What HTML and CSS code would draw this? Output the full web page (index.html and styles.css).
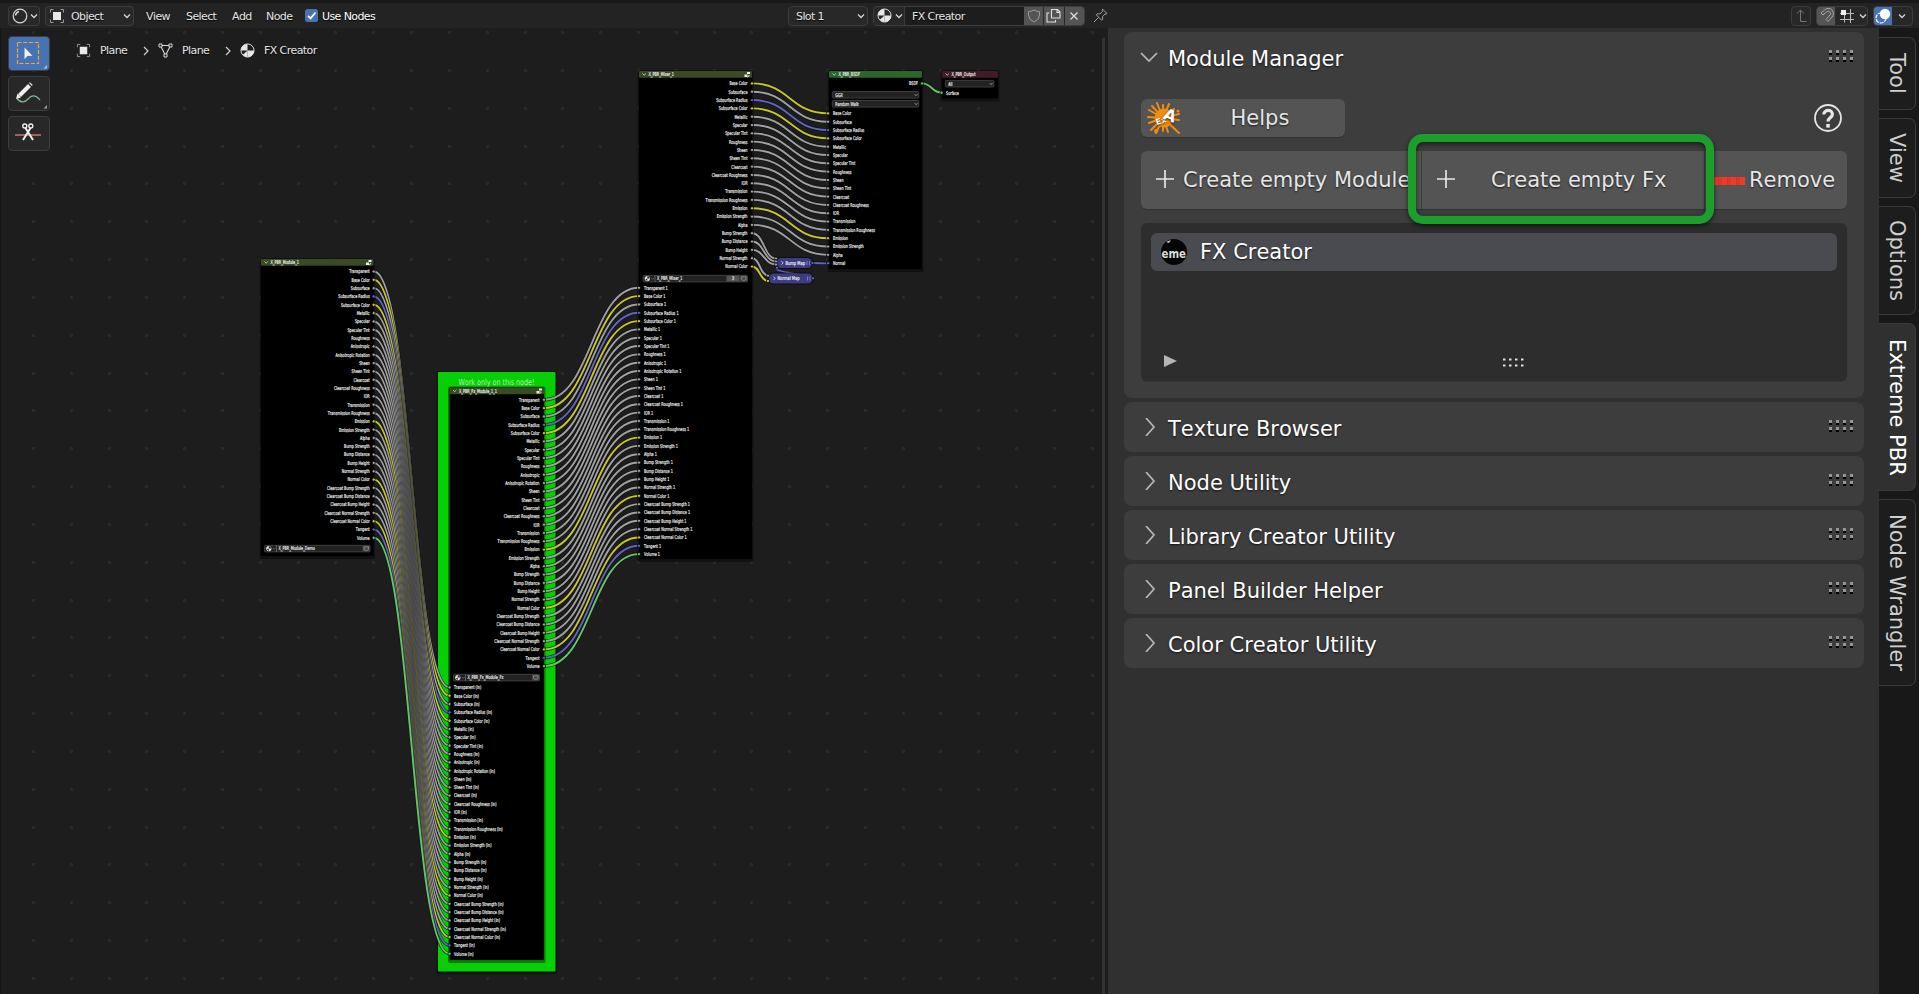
FILE: index.html
```html
<!DOCTYPE html>
<html lang="en">
<head>
<meta charset="utf-8">
<title>Shader Editor</title>
<link rel="stylesheet" href="styles.css">
</head>
<body>
<svg width="0" height="0" class="defs">
  <defs>
    <symbol id="ball" viewBox="0 0 16 16"><circle cx="8" cy="8" r="7" fill="none" stroke="#e0e0e0" stroke-width="1"/><path d="M1 8a7 7 0 0 1 7-7v7zM8 8h7a7 7 0 0 1-7 7z" fill="#e6e6e6"/><path d="M3 12.500L8 8v7a7 7 0 0 1-5-2.500z" fill="#e6e6e6"/></symbol>
    <symbol id="obj" viewBox="0 0 16 16"><rect x="4" y="4" width="8" height="8" fill="#e8e8e8"/><path d="M1.500 4.500v-3h3M11.500 1.500h3v3M14.500 11.500v3h-3M4.500 14.500h-3v-3" fill="none" stroke="#9a9a9a"/></symbol>
    <symbol id="chev" viewBox="0 0 8 8"><path d="M1 2.500l3 3 3-3" fill="none" stroke="#d6d6d6" stroke-width="1.300"/></symbol>
    <symbol id="sep" viewBox="0 0 8 10"><path d="M2 1l4 4-4 4" fill="none" stroke="#cfcfcf" stroke-width="1.200"/></symbol>
    <symbol id="plus" viewBox="0 0 18 18"><path d="M9 0v18M0 9h18" stroke="#e6e6e6" stroke-width="1.700"/></symbol>
    <symbol id="open" viewBox="0 0 18 18"><path d="M1 5l8 8 8-8" fill="none" stroke="#b8b8b8" stroke-width="1.700"/></symbol>
    <symbol id="shut" viewBox="0 0 18 18"><path d="M6 0l8 9-8 9" fill="none" stroke="#b8b8b8" stroke-width="1.700"/></symbol>
    <symbol id="grip" viewBox="0 0 25 13">
      <path d="M0 1.500h3M7 1.500h3M14 1.500h3M21 1.500h3M0 8.500h3M7 8.500h3M14 8.500h3M21 8.500h3" stroke="#979797" stroke-width="3"/>
      <path d="M0 4h3M7 4h3M14 4h3M21 4h3M0 11h3M7 11h3M14 11h3M21 11h3" stroke="#000" stroke-width="2"/></symbol>
  </defs>
</svg>

<header class="topbar">
  <div class="box editor"><svg width="16" height="16" viewBox="0 0 16 16"><circle cx="8" cy="8" r="6.800" fill="none" stroke="#d8d8d8" stroke-width="1.200"/><path d="M3.500 7.500q.4-3 3.500-4" fill="none" stroke="#d8d8d8" stroke-width="1.500"/></svg><svg width="8" height="8"><use href="#chev"/></svg></div>
  <div class="box mode"><svg width="16" height="16"><use href="#obj"/></svg><span>Object</span><svg class="end" width="8" height="8"><use href="#chev"/></svg></div>
  <nav class="menu"><span>View</span><span>Select</span><span>Add</span><span>Node</span></nav>
  <label class="usenodes"><svg width="13" height="13"><rect width="13" height="13" rx="2.500" fill="#4772b3"/><path d="M3 6.800l2.600 2.600L10.500 3.500" fill="none" stroke="#fff" stroke-width="1.700"/></svg><span>Use Nodes</span></label>
  <div class="box slot"><span>Slot 1</span><svg class="end" width="8" height="8"><use href="#chev"/></svg></div>
  <div class="box material">
    <div class="matpick"><svg width="15" height="15"><use href="#ball"/></svg><svg width="8" height="8"><use href="#chev"/></svg></div>
    <div class="matname">FX Creator</div>
    <div class="cell"><svg width="14" height="14" viewBox="0 0 14 14"><path d="M7 1q3 1.600 5.500 1.600v3.400q0 4.500-5.500 7q-5.500-2.500-5.500-7V2.600q2.500 0 5.500-1.600z" fill="none" stroke="#9a9a9a"/></svg></div>
    <div class="cell"><svg width="15" height="15" viewBox="0 0 15 15"><path d="M5.500 1.500h6l2.500 2.500v6h-8.500zM11 1v3.500h3.500M3.500 5h-2.500v9h8.500v-2" fill="none" stroke="#e0e0e0" stroke-width="1.100"/></svg></div>
    <div class="cell"><svg width="10" height="10" viewBox="0 0 10 10"><path d="M1.500 1.500l7 7M8.500 1.500l-7 7" stroke="#e0e0e0" stroke-width="1.200"/></svg></div>
  </div>
  <svg class="pin" width="15" height="15" viewBox="0 0 15 15"><path d="M9.500 1l4.500 4.500-1 .7-1-.3-2.500 2.800.2 2.600-1 1-5.500-5.500 1-1 2.700.2 2.700-2.500-.4-1.200zM5.500 9.500L1 14" fill="none" stroke="#a0a0a0"/></svg>
  <div class="box up"><svg width="14" height="14" viewBox="0 0 14 14"><path d="M3 4.500l3.500-3.500 3.500 3.500M6.500 1v11.500h6" fill="none" stroke="#777"/></svg></div>
  <div class="box snap"><div class="magnet"><svg width="15" height="15" viewBox="0 0 15 15"><path d="M2 5l3.500-3a5 5 0 0 1 7.500 7l-4 4.500-2-2 4-4.500a2.200 2.200 0 0 0-3.500-3l-3.500 3z" fill="none" stroke="#a8a8a8"/></svg></div><svg width="14" height="14" viewBox="0 0 14 14"><path d="M0 4.500h14M0 10.500h14M4.500 1v12.500M10.500 0v14" stroke="#bdbdbd"/><rect x="1" y="1" width="5" height="5" fill="#f0f0f0"/></svg><svg width="8" height="8"><use href="#chev"/></svg></div>
  <div class="box overlay"><div class="on"><svg width="16" height="16" viewBox="0 0 16 16"><circle cx="6" cy="10" r="5" fill="none" stroke="#fff" stroke-width="1.200" stroke-dasharray="4 1"/><circle cx="10" cy="6" r="5.200" fill="#fff"/></svg></div><svg width="8" height="8"><use href="#chev"/></svg></div>
</header>

<main class="work">
  <section class="canvas">
    <svg id="graph" class="graph" width="1108" height="966" viewBox="0 28 1108 966"></svg>
    <div class="crumbs">
      <svg width="15" height="15"><use href="#obj"/></svg><span class="c1">Plane</span><svg width="8" height="10"><use href="#sep"/></svg>
      <svg class="mesh" width="15" height="15" viewBox="0 0 15 15"><path d="M2.500 2.500h10L7.500 12.500z" fill="none" stroke="#d8d8d8" stroke-width="1.100"/><path d="M1 1h3v3H1zM11 1h3v3h-3zM6 11h3v3H6z" fill="#1d1d1d" stroke="#d8d8d8"/></svg><span class="c1">Plane</span><svg width="8" height="10"><use href="#sep"/></svg>
      <svg class="mesh" width="15" height="15"><use href="#ball"/></svg><span>FX Creator</span>
    </div>
    <div class="tools">
      <div class="tool active"><svg width="42" height="35" viewBox="0 0 42 35"><rect x="9.500" y="6.500" width="21" height="21" fill="none" stroke="#f0a830" stroke-width="1.200" stroke-dasharray="4 1.700"/><path d="M16.500 11.500v11.500l3-3 5-.3z" fill="#f0f0f0"/><path d="M39 29v3.500h-3.500z" fill="#a8bcdc"/></svg></div>
      <div class="tool"><svg width="42" height="35" viewBox="0 0 42 35"><path d="M9 22.500c4 5 8 4 11 .5s7-5 12 1" fill="none" stroke="#7fb795" stroke-width="1.300"/><path d="M11.500 19.500L21.500 9.500" stroke="#eee" stroke-width="4"/><path d="M22.500 8.500l.8-.8" stroke="#eee" stroke-width="4"/><path d="M9.500 17.500l3.500 4-5 1.500z" fill="#eee"/><path d="M39 29v3.500h-3.500z" fill="#999"/></svg></div>
      <div class="tool"><svg width="42" height="35" viewBox="0 0 42 35"><path d="M7 19h26" stroke="#a4605c" stroke-width="2"/><path d="M17.500 12l7.500 12M22.500 12l-7.500 12" stroke="#eee" stroke-width="2"/><circle cx="16.800" cy="10" r="2" fill="none" stroke="#eee" stroke-width="1.400"/><circle cx="22.800" cy="10" r="2" fill="none" stroke="#eee" stroke-width="1.400"/></svg></div>
    </div>
    <div class="scroll"></div>
  </section>

  <aside class="sidebar">
    <section class="panel manager">
      <div class="head"><svg width="18" height="18"><use href="#open"/></svg><h2>Module Manager</h2><svg class="grip" width="25" height="13"><use href="#grip"/></svg></div>
      <div class="helps">
        <div class="btn help"><svg width="34" height="34" viewBox="0 0 34 34"><g stroke="#f28c0c" stroke-linecap="round" fill="none"><path d="M16 17L10 2M16 17L16 4M16 17L22 3M16 17L27 8M16 17L32 13M16 17L32 19M16 17L32 32M16 17L21 31M16 17L16 30M16 17L9 32M16 17L4 29M16 17L2 22M16 17L1 16M16 17L2 9M16 17L5 5" stroke-width="2"/></g><circle cx="17" cy="17" r="9.500" fill="#f28c0c"/><circle cx="9" cy="30" r="2" fill="#f28c0c"/><circle cx="31" cy="10" r="1.500" fill="#f28c0c"/><g fill="#fff" font-family="DejaVu Sans" font-weight="bold"><text x="9.500" y="24" font-size="8" transform="rotate(-18 10 23)">Ex</text><text x="16" y="19" font-size="16" transform="rotate(22 20 16)">A</text></g></svg><span>Helps</span></div>
        <svg class="quest" width="28" height="28" viewBox="0 0 28 28"><circle cx="14" cy="14" r="13" fill="none" stroke="#e6e6e6" stroke-width="1.800"/><path d="M9.800 10.500c.2-5.500 8.800-5.500 8.600 0-.1 3-4.400 3.100-4.400 7" fill="none" stroke="#e6e6e6" stroke-width="3.200"/><rect x="12.200" y="20" width="3.600" height="3.600" fill="#e6e6e6"/></svg>
      </div>
      <div class="actions">
        <div class="act mod"><svg width="18" height="18"><use href="#plus"/></svg><span>Create empty Module</span></div>
        <div class="act fx"><svg width="18" height="18"><use href="#plus"/></svg><span>Create empty Fx</span><i class="marker"></i></div>
        <div class="act rem"><i class="minus"></i><span>Remove</span></div>
      </div>
      <div class="list">
        <div class="item"><svg width="26" height="26" viewBox="0 0 26 26"><circle cx="13" cy="13" r="13" fill="#050505"/><path d="M5 3l5-2-2 3z" fill="#ccc"/><text x="0.500" y="18.500" fill="#ddd" font-family="DejaVu Sans" font-weight="bold" font-size="13" textLength="24.500" lengthAdjust="spacingAndGlyphs">eme</text></svg><span>FX Creator</span></div>
        <div class="listfoot"><svg width="13" height="12" viewBox="0 0 13 12"><path d="M0 0l13 6-13 6z" fill="#b5b5b5"/></svg><svg width="22" height="9" viewBox="0 0 22 9"><path d="M0 1.500h2.500M6 1.500h2.500M12 1.500h2.500M18 1.500h2.500M0 7.500h2.500M6 7.500h2.500M12 7.500h2.500M18 7.500h2.500" stroke="#e0e0e0" stroke-width="2.200"/></svg></div>
      </div>
    </section>
    <section class="panel"><div class="head"><svg width="18" height="18"><use href="#shut"/></svg><h2>Texture Browser</h2><svg class="grip" width="25" height="13"><use href="#grip"/></svg></div></section>
    <section class="panel"><div class="head"><svg width="18" height="18"><use href="#shut"/></svg><h2>Node Utility</h2><svg class="grip" width="25" height="13"><use href="#grip"/></svg></div></section>
    <section class="panel"><div class="head"><svg width="18" height="18"><use href="#shut"/></svg><h2>Library Creator Utility</h2><svg class="grip" width="25" height="13"><use href="#grip"/></svg></div></section>
    <section class="panel"><div class="head"><svg width="18" height="18"><use href="#shut"/></svg><h2>Panel Builder Helper</h2><svg class="grip" width="25" height="13"><use href="#grip"/></svg></div></section>
    <section class="panel"><div class="head"><svg width="18" height="18"><use href="#shut"/></svg><h2>Color Creator Utility</h2><svg class="grip" width="25" height="13"><use href="#grip"/></svg></div></section>
  </aside>
  <nav class="tabs">
    <div class="tab t-tool">Tool</div><div class="tab t-view">View</div><div class="tab t-opt">Options</div><div class="tab t-ext">Extreme PBR</div><div class="tab t-wr">Node Wrangler</div>
  </nav>
</main>
<script src="graph.js"></script>
</body>
</html>
```

FILE: styles.css
```css
* { box-sizing: border-box; }
body { margin: 0; width: 1919px; height: 994px; overflow: hidden; background: #1d1d1d; color: #e6e6e6; font-family: "DejaVu Sans", sans-serif; font-kerning: none; display: flex; flex-direction: column; }
svg { display: block; flex: none; }
.defs { display: none; }

.topbar { flex: none; height: 28px; border-top: 3px solid #181818; background: #232323; padding-left: 8px; display: flex; align-items: center; font-size: 11px; letter-spacing: -0.6px; white-space: nowrap; text-shadow: 0 1px 1px #000; }
.topbar span { padding-top: 1px; }
.box { height: 20px; border: 1px solid #3d3d3d; border-radius: 4px; background: #282828; display: flex; align-items: center; overflow: hidden; flex: none; }
.end { margin-left: auto; }
.editor { width: 32px; padding-left: 3px; gap: 2px; }
.mode { width: 89px; margin-left: 5px; padding: 0 2px 0 3px; gap: 6px; }
.menu { display: flex; margin-left: 12px; width: 159px; }
.menu span:nth-child(1) { width: 40px; }
.menu span:nth-child(2) { width: 46px; }
.menu span:nth-child(3) { width: 34px; }
.usenodes { display: flex; align-items: center; gap: 4px; width: 483px; color: #fff; }
.slot { width: 80px; padding: 0 2px 0 7px; }
.material { width: 212px; margin-left: 5px; }
.matpick { width: 31px; height: 100%; padding-left: 3px; display: flex; align-items: center; gap: 3px; border-right: 1px solid #3d3d3d; }
.matname { width: 119px; height: 100%; padding-left: 7px; line-height: 19px; background: #1d1d1d; }
.cell { flex: 1; height: 100%; margin-left: 1px; background: #545454; display: flex; align-items: center; justify-content: center; }
.cell:nth-child(3) { margin-left: 0; }
.pin { margin-left: 8px; }
.up { width: 20px; margin-left: 683px; justify-content: center; }
.snap { width: 52px; margin-left: 5px; gap: 5px; }
.magnet { width: 19px; height: 100%; background: #545454; display: flex; align-items: center; justify-content: center; }
.overlay { width: 40px; margin-left: 5px; gap: 6px; }
.on { width: 18px; height: 100%; background: #4772b3; display: flex; align-items: center; justify-content: center; }

.work { flex: 1; display: flex; min-height: 0; }
.canvas { position: relative; width: 1108px; height: 966px; background: #1d1d1d; border-left: 1px solid #151515; }
.graph { margin-left: -1px; }
.graph text { font-family: "DejaVu Sans", sans-serif; text-rendering: geometricPrecision; }
.crumbs { position: absolute; left: 75px; top: 15px; display: flex; align-items: center; font-size: 11px; letter-spacing: -0.6px; text-shadow: 0 1px 1px #000; white-space: nowrap; }
.crumbs span { margin-left: 9px; }
.crumbs .c1 { width: 42px; }
.mesh { margin-left: 8px; }
.tools { position: absolute; left: 7px; top: 8px; display: grid; gap: 5px; }
.tool { width: 42px; height: 35px; border: 1px solid #3d3d3d; border-radius: 4px; background: #282828; }
.tool svg { margin: -1px; }
.tool.active { background: #4772b3; }
.scroll { position: absolute; left: 1101px; top: 10px; bottom: 0; width: 3px; background: #333; }

.sidebar { width: 771px; height: 966px; background: #303030; padding: 4px 15px 0 16px; display: flex; flex-direction: column; gap: 4px; font-size: 21px; text-shadow: 0 1px 2px rgba(0,0,0,.75); }
.panel { height: 50px; flex: none; border-radius: 8px; background: #3d3d3d; }
.manager { height: 366px; }
.head { height: 50px; padding: 0 10px 0 16px; display: flex; align-items: center; }
.head h2 { margin: 0 0 0 10px; padding-top: 3px; font-size: 21px; line-height: 26px; font-weight: 400; color: #fff; }
.grip { margin: 0 0 1px auto; }
.helps { margin: 17px 22px 0 17px; display: flex; align-items: center; justify-content: space-between; }
.help { width: 204px; height: 38px; border-radius: 6px; background: #545454; box-shadow: 0 1px #323232; display: flex; align-items: center; padding-left: 6px; }
.help span { width: 158px; text-align: center; }
.actions { margin: 14px 17px 0; height: 58px; display: flex; }
.act { height: 58px; background: #545454; box-shadow: 0 1px #323232; display: flex; align-items: center; white-space: nowrap; }
.mod { width: 280px; border-radius: 6px 0 0 6px; padding-left: 15px; gap: 9px; overflow: hidden; }
.mod svg, .fx svg { margin-top: -3px; }
.fx { position: relative; width: 284px; padding-left: 15px; border-left: 1px solid #3a3a3a; border-right: 1px solid #3a3a3a; }
.fx span { margin-left: 36px; }
.marker { position: absolute; left: -14px; top: -17px; width: 306px; height: 90px; border: 8px solid #1b9e2b; border-radius: 15px; box-shadow: 0 2px 5px rgba(0,0,0,.6), inset 0 2px 5px rgba(0,0,0,.6); z-index: 2; }
.rem { width: 142px; border-radius: 0 6px 6px 0; padding-left: 8px; }
.minus { width: 32px; height: 8px; margin: 1px 4px 0 0; background: repeating-linear-gradient(90deg, #ee3c2a 0 5px, #d93220 5px 6px, #e33625 6px 9px); }
.list { margin: 14px 17px 0; height: 158px; border-radius: 6px; background: #2d2d2d; box-shadow: 0 1px #343434; padding: 10px 10px 0; }
.item { height: 38px; border-radius: 6px; background: #4a4b50; display: flex; align-items: center; padding-left: 10px; gap: 13px; color: #fff; }
.listfoot { margin: 84px 0 0 13px; display: flex; align-items: center; }
.listfoot svg + svg { margin: 2px 0 0 326px; }

.tabs { width: 40px; height: 966px; background: #181818; padding-top: 9px; display: flex; flex-direction: column; gap: 8px; font-size: 21px; }
.tab { width: 37px; border: 1px solid #3a3a3a; border-left: 0; border-radius: 0 7px 7px 0; background: #1d1d1d; writing-mode: vertical-rl; display: flex; align-items: center; justify-content: center; color: #cfcfcf; padding-right: 1px; white-space: nowrap; }
.t-tool { height: 73px; }
.t-view { height: 80px; }
.t-opt { height: 109px; }
.t-ext { height: 168px; background: #303030; color: #fff; }
.t-wr { height: 187px; }
```

FILE: graph.js
```js
const NS = 'http://www.w3.org/2000/svg';
const svg = document.getElementById('graph');
const COL = { g: '#a1a1a1', y: '#c7c729', b: '#6363c7', n: '#63c763' };

function el(tag, attrs, parent = svg) {
  const e = document.createElementNS(NS, tag);
  for (const k in attrs) e.setAttribute(k, attrs[k]);
  parent.appendChild(e);
  return e;
}
function label(str, x, y, opt = {}) {
  const k = opt.k || 0.65;
  const fill = opt.fill || '#e8e8e8';
  const t = el('text', {
    transform: `translate(${x} ${y + 1.9}) scale(${k} 1)`,
    'font-size': opt.size || 5.2, fill, stroke: fill, 'stroke-width': opt.size ? 0 : 0.22, 'text-anchor': opt.anchor || 'start'
  });
  t.textContent = str;
}
function colorOf(name) {
  if (/Color$|^Emission$/.test(name)) return COL.y;
  if (/Radius$|^Tangent$|^Normal$/.test(name)) return COL.b;
  if (name === 'Volume' || name === 'Surface' || name === 'BSDF') return COL.n;
  return COL.g;
}
function wire(x1, y1, x2, y2, color) {
  const h = Math.abs(x2 - x1) * 0.5;
  const d = `M${x1} ${y1}C${x1 + h} ${y1} ${x2 - h} ${y2} ${x2} ${y2}`;
  el('path', { d, fill: 'none', stroke: '#101010', 'stroke-opacity': 0.7, 'stroke-width': 3.4 });
  el('path', { d, fill: 'none', stroke: color, 'stroke-width': 1.9 });
}
function socket(x, y, color) {
  el('circle', { cx: x, cy: y, r: 1.6, fill: color, stroke: '#000', 'stroke-width': 0.7 });
}
function body(x, y, w, h, head, title, icon) {
  el('rect', { x: x - 1.5, y: y - 1, width: w + 3, height: h + 4, rx: 2, fill: '#000', opacity: 0.4 });
  el('rect', { x, y, width: w, height: h, rx: 1, fill: '#000' });
  el('rect', { x, y, width: w, height: 6.8, rx: 1, fill: head });
  el('path', { d: `M${x + 3.5} ${y + 2.5}l1.700 1.700 1.700-1.700`, fill: 'none', stroke: '#ddd', 'stroke-width': 0.8 });
  label(title, x + 9.5, y + 3.2);
  if (icon) {
    el('path', { d: `M${x + w - 5} ${y + 1}h3v2h-3zM${x + w - 7.500} ${y + 3.500}h3v2.500h-3z`, fill: '#eee' });
    el('path', { d: `M${x + w - 3.500} ${y + 4}q2 1-1 2`, fill: 'none', stroke: '#eee', 'stroke-width': 0.8 });
  }
}
function field(x, y, w, text, kind, count) {
  el('rect', { x, y, width: w, height: 6.6, rx: 1, fill: '#222', stroke: '#4a4a4a', 'stroke-width': 0.8 });
  if (kind === 'drop') {
    label(text, x + 3, y + 3.2);
    el('path', { d: `M${x + w - 4} ${y + 2.800}l1.300 1.300 1.300-1.300`, fill: 'none', stroke: '#ddd', 'stroke-width': 0.7 });
    return;
  }
  el('circle', { cx: x + 4.3, cy: y + 3.3, r: 2.6, fill: '#e6e6e6' });
  el('path', { d: `M${x + 4.300} ${y + 3.300}v-2.300a2.300 2.300 0 0 1 2.300 2.300zM${x + 4.300} ${y + 3.300}v2.300l-2-1.500z`, fill: '#222' });
  el('path', { d: `M${x + 8.500} ${y + 2.800}l1.200 1.200 1.200-1.200M${x + 12} ${y}v6.600`, fill: 'none', stroke: '#888', 'stroke-width': 0.6 });
  label(text, x + 14, y + 3.2);
  if (count) {
    el('rect', { x: x + w - 21, y: y + 0.4, width: 13, height: 5.800, fill: '#545454' });
    label(count, x + w - 14.5, y + 3.2, { anchor: 'middle' });
  }
  el('rect', { x: x + w - 7.5, y: y + 0.4, width: 7.2, height: 5.800, fill: '#484848' });
  el('path', { d: `M${x + w - 6} ${y + 1.500}h4.500v2.500l-2.200 1.500-2.300-1.500z`, fill: 'none', stroke: '#999', 'stroke-width': 0.7 });
}

const FULL = ['Transparent', 'Base Color', 'Subsurface', 'Subsurface Radius', 'Subsurface Color', 'Metallic', 'Specular', 'Specular Tint', 'Roughness', 'Anisotropic', 'Anisotropic Rotation', 'Sheen', 'Sheen Tint', 'Clearcoat', 'Clearcoat Roughness', 'IOR', 'Transmission', 'Transmission Roughness', 'Emission', 'Emission Strength', 'Alpha', 'Bump Strength', 'Bump Distance', 'Bump Height', 'Normal Strength', 'Normal Color', 'Clearcoat Bump Strength', 'Clearcoat Bump Distance', 'Clearcoat Bump Height', 'Clearcoat Normal Strength', 'Clearcoat Normal Color', 'Tangent', 'Volume'];
const BSDF = FULL.slice(1, 21).filter(n => !n.startsWith('Aniso'));
const MIX = BSDF.concat(['Bump Strength', 'Bump Distance', 'Bump Height', 'Normal Strength', 'Normal Color']);
const at = (first, i) => first + i * 8.322;

/* dotted backdrop */
for (let y = 32.6; y < 994; y += 37.83)
  for (let x = 33.5; x < 1108; x += 37.81)
    el('rect', { x: Math.round(x - 1.5), y: Math.round(y - 1.5), width: 3, height: 3, fill: '#292929' });

/* highlighted frame */
el('rect', { x: 436.5, y: 371, width: 120.5, height: 603, rx: 2, fill: '#000', opacity: 0.45 });
el('rect', { x: 438, y: 372, width: 117.5, height: 599.5, rx: 1, fill: '#06cf06' });
label('Work only on this node!', 496.5, 383.3, { size: 8.4, k: 0.76, anchor: 'middle', fill: '#b4eeb0' });

/* links */
FULL.forEach((n, i) => wire(373.7, at(271.5, i), 449.5, at(687.4, i), colorOf(n)));
FULL.forEach((n, i) => wire(544, at(399.8, i), 639, at(287.8, i), colorOf(n)));
BSDF.forEach((n, i) => wire(752, at(83.4, i), 828, at(113.4, i), colorOf(n)));
wire(752, at(83.4, 18), 776, 258.5, COL.g);
wire(752, at(83.4, 19), 776, 261.5, COL.g);
wire(752, at(83.4, 20), 776, 264.5, COL.g);
wire(752, at(83.4, 21), 768, 275.5, COL.g);
wire(752, at(83.4, 22), 768, 281, COL.y);
wire(812, 263, 828, 263.4, COL.b);
el('path', { d: 'M812 278C822 276 768 272 777 267.500', fill: 'none', stroke: COL.b, 'stroke-width': 1.3 });
wire(922, 83.4, 941.5, 92.7, COL.n);

/* nodes */
body(261, 259, 112.5, 297, '#3a4a24', 'X_PBR_Module_1', true);
FULL.forEach((n, i) => { const y = at(271.5, i); label(n, 369.7, y, { anchor: 'end' }); socket(373.7, y, colorOf(n)); });
field(264.5, 545.3, 105.5, 'X_PBR_Module_Demo', 'group');

body(449.5, 387.5, 94.5, 572.5, '#3a4a24', 'X_PBR_Fx_Module_1_1', true);
FULL.forEach((n, i) => { const y = at(399.8, i); label(n, 539.5, y, { anchor: 'end' }); socket(544, y, colorOf(n)); });
field(453.5, 674.3, 86, 'X_PBR_Fx_Module_Fx', 'group');
FULL.forEach((n, i) => { const y = at(687.4, i); label(n + ' (in)', 454, y); socket(449.5, y, colorOf(n)); });

body(639, 71, 113, 488, '#3a4a24', 'X_PBR_Mixer_1', true);
MIX.forEach((n, i) => { const y = at(83.4, i); label(n, 747.5, y, { anchor: 'end' }); socket(752, y, colorOf(n)); });
field(643, 275.3, 104.5, 'X_PBR_Mixer_1', 'group', '3');
FULL.forEach((n, i) => { const y = at(287.8, i); label(n + ' 1', 644, y); socket(639, y, colorOf(n)); });

body(829, 71, 93, 198, '#2b652b', 'X_PBR_BSDF');
label('BSDF', 918, 83.4, { anchor: 'end' });
socket(922, 83.4, COL.n);
field(832.3, 91.5, 86.5, 'GGX', 'drop');
field(832.3, 100.5, 86.5, 'Random Walk', 'drop');
BSDF.concat('Normal').forEach((n, i) => { const y = at(113.4, i); label(n, 833, y); socket(828, y, colorOf(n)); });

body(942, 71, 56, 27.5, '#411c26', 'X_PBR_Output');
field(945.3, 80.4, 48.5, 'All', 'drop');
label('Surface', 946, 92.7);
socket(941.5, 92.7, COL.n);

function pill(x, y, w, text) {
  el('rect', { x: x - 1, y: y - 1, width: w + 2, height: 12, rx: 5, fill: '#000', opacity: 0.5 });
  el('rect', { x, y, width: w, height: 10, rx: 4.5, fill: '#3c3c83' });
  el('path', { d: `M${x + 4.500} ${y + 3.200}l1.600 1.700-1.600 1.700`, fill: 'none', stroke: '#eee', 'stroke-width': 0.8 });
  label(text, x + 8.5, y + 4.8, { k: 0.7 });
  el('path', { d: `M${x + w - 5} ${y + 3}v4M${x + w - 2.500} ${y + 3}v4`, stroke: '#8d8dc8', 'stroke-width': 0.8 });
}
pill(777, 258, 35, 'Bump Map');
[258.5, 261.5, 264.5].forEach(y => socket(776, y, COL.g));
socket(777, 267.8, COL.b);
socket(812.5, 263, COL.b);
pill(769, 273.5, 43.5, 'Normal Map');
socket(768, 275.7, COL.g);
socket(768, 281, COL.y);
socket(813, 278.3, COL.b);
```
